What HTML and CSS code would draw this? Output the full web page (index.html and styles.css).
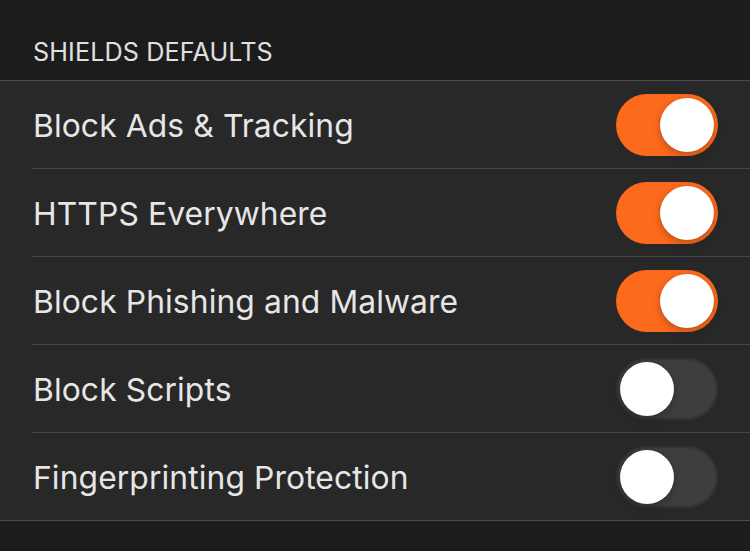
FILE: index.html
```html
<!DOCTYPE html>
<html>
<head>
<meta charset="utf-8">
<link rel="stylesheet" href="styles.css">
</head>
<body>
<div class="page">
  <div class="section-header">SHIELDS DEFAULTS</div>
  <div class="list">
    <div class="row"><span class="label">Block Ads &amp; Tracking</span><span class="toggle on"><span class="knob"></span></span></div>
    <div class="row"><span class="label">HTTPS Everywhere</span><span class="toggle on"><span class="knob"></span></span></div>
    <div class="row"><span class="label">Block Phishing and Malware</span><span class="toggle on"><span class="knob"></span></span></div>
    <div class="row"><span class="label">Block Scripts</span><span class="toggle"><span class="knob"></span></span></div>
    <div class="row last"><span class="label">Fingerprinting Protection</span><span class="toggle"><span class="knob"></span></span></div>
  </div>
</div>
</body>
</html>
```

FILE: styles.css
```css
html, body {
  margin: 0;
  padding: 0;
  background: #1c1c1c;
}
body {
  font-family: Inter, "Open Sans", sans-serif;
  color: #e6e6e6;
  width: 750px;
  height: 551px;
  overflow: hidden;
}
.section-header {
  height: 81px;
  box-sizing: border-box;
  padding: 37px 0 0 33px;
  font-size: 25.2px;
  letter-spacing: 0.1px;
  color: #e0e0e0;
  border-bottom: 1px solid #4a4a4a;
}
.list {
  background: #282828;
  border-bottom: 1px solid #4a4a4a;
}
.row {
  display: flex;
  align-items: center;
  justify-content: space-between;
  height: 88px;
  margin-left: 32px;
  padding-right: 32px;
  box-sizing: border-box;
  border-bottom: 1px solid #474747;
}
.row.last {
  border-bottom: none;
  height: 87px;
}
.label {
  font-size: 31.8px;
  padding-left: 1px;
  letter-spacing: 0.1px;
  padding-top: 2px;
}
.toggle {
  width: 102px;
  height: 62px;
  border-radius: 31px;
  background: #3e3e40;
  box-shadow: inset 0 0 0 2px #333335;
  display: flex;
  align-items: center;
  padding: 0 4px;
  box-sizing: border-box;
  justify-content: flex-start;
}
.toggle.on {
  background: #fc6a1d;
  box-shadow: none;
  justify-content: flex-end;
}
.knob {
  width: 54px;
  height: 54px;
  border-radius: 50%;
  background: #ffffff;
  box-shadow: 0 3px 8px rgba(0,0,0,0.25), 0 0 1px rgba(0,0,0,0.2);
}
```
